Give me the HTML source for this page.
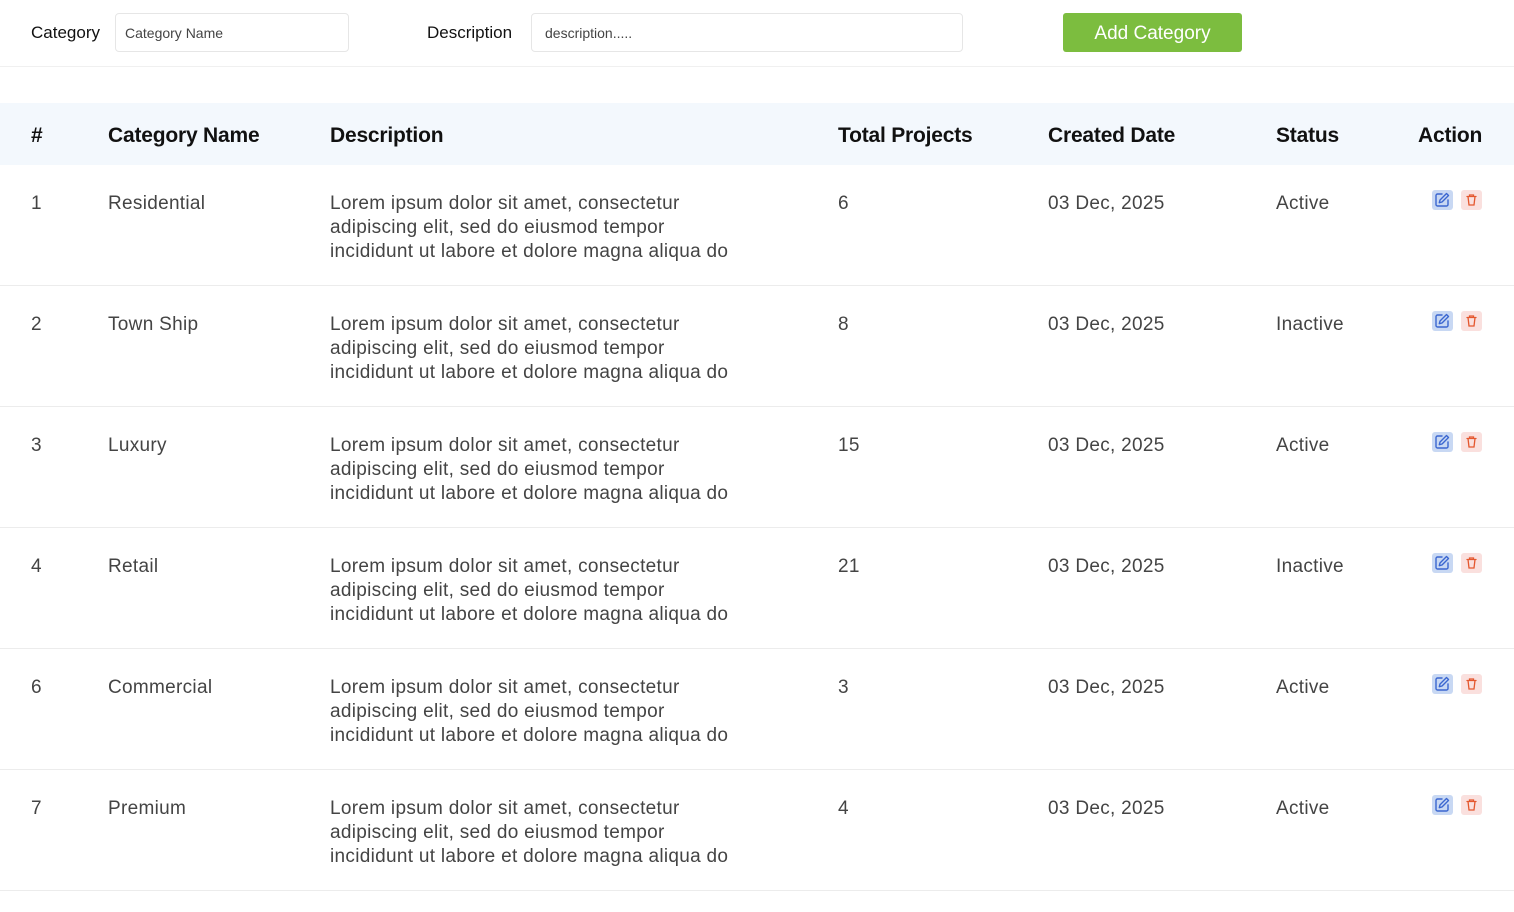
<!DOCTYPE html><html><head><style>
body{margin:0;width:1514px;height:912px;background:#fff;font-family:"Liberation Sans",sans-serif;position:relative;overflow:hidden}
.a{position:absolute}
.lbl{font-size:17px;color:#111;top:23px}
.inp{border:1px solid #e6e6e6;border-radius:4px;height:39px;top:13px;font-size:14px;color:#444;line-height:38px;padding-left:9px;box-sizing:border-box}
.btn{left:1063px;top:13px;width:179px;height:39px;background:#7cbd3f;border-radius:3px;color:#fff;font-size:19px;text-align:center;line-height:42px}
.hd{top:103px;left:0;width:1514px;height:62px;background:#f3f8fd}
.h{top:124px;font-size:21px;font-weight:bold;color:#111;letter-spacing:-0.2px}
.row{left:0;width:1514px;height:120px;border-bottom:1.5px solid #ececec}
.c{font-size:19px;color:#444;line-height:24px;top:27px;letter-spacing:0.3px}
.ic{width:21px;height:20px;border-radius:3px;top:25px}
</style></head><body>
<div class="a lbl" style="left:31px">Category</div>
<div class="a inp" style="left:115px;width:234px">Category Name</div>
<div class="a lbl" style="left:427px">Description</div>
<div class="a inp" style="left:531px;width:432px;padding-left:13px">description.....</div>
<div class="a btn">Add Category</div>
<div class="a" style="left:0;top:66px;width:1514px;border-top:1.5px solid #f0f0f0"></div>
<div class="a hd"></div>
<div class="a h" style="left:31px">#</div>
<div class="a h" style="left:108px">Category Name</div>
<div class="a h" style="left:330px">Description</div>
<div class="a h" style="left:838px">Total Projects</div>
<div class="a h" style="left:1048px">Created Date</div>
<div class="a h" style="left:1276px">Status</div>
<div class="a h" style="left:1418px">Action</div>
<div id="rows"></div>
<script>
var d=[["1","Residential","6","Active"],["2","Town Ship","8","Inactive"],["3","Luxury","15","Active"],["4","Retail","21","Inactive"],["6","Commercial","3","Active"],["7","Premium","4","Active"]];
var h="";d.forEach(function(r,i){var t=165+i*121;
h+='<div class="a row" style="top:'+t+'px">'+
'<div class="a c" style="left:31px">'+r[0]+'</div>'+
'<div class="a c" style="left:108px">'+r[1]+'</div>'+
'<div class="a c" style="left:330px">Lorem ipsum dolor sit amet, consectetur<br>adipiscing elit, sed do eiusmod tempor<br>incididunt ut labore et dolore magna aliqua do</div>'+
'<div class="a c" style="left:838px">'+r[2]+'</div>'+
'<div class="a c" style="left:1048px">03 Dec, 2025</div>'+
'<div class="a c" style="left:1276px">'+r[3]+'</div>'+
'<div class="a ic" style="left:1432px;background:#c8d8f3"><svg width="21" height="20" viewBox="0 0 21 20" fill="none" stroke="#3a66d0" stroke-width="1.4" stroke-linecap="round" stroke-linejoin="round"><path d="M10 4H5.5A1.5 1.5 0 0 0 4 5.5v9A1.5 1.5 0 0 0 5.5 16h9a1.5 1.5 0 0 0 1.5-1.5V10"/><path d="M14.5 3.5l2 2L10 12l-2.7.7.7-2.7z"/></svg></div>'+
'<div class="a ic" style="left:1461px;background:#fae0de"><svg width="21" height="20" viewBox="0 0 21 20" fill="none" stroke="#e4572e" stroke-width="1.3" stroke-linecap="round"><path d="M6 6.5h9M8.5 6.5V5h4v1.5M7 6.5l1 8.5h5l1-8.5"/></svg></div>'+
'</div>';});
document.getElementById("rows").innerHTML=h;
</script>
</body></html>
